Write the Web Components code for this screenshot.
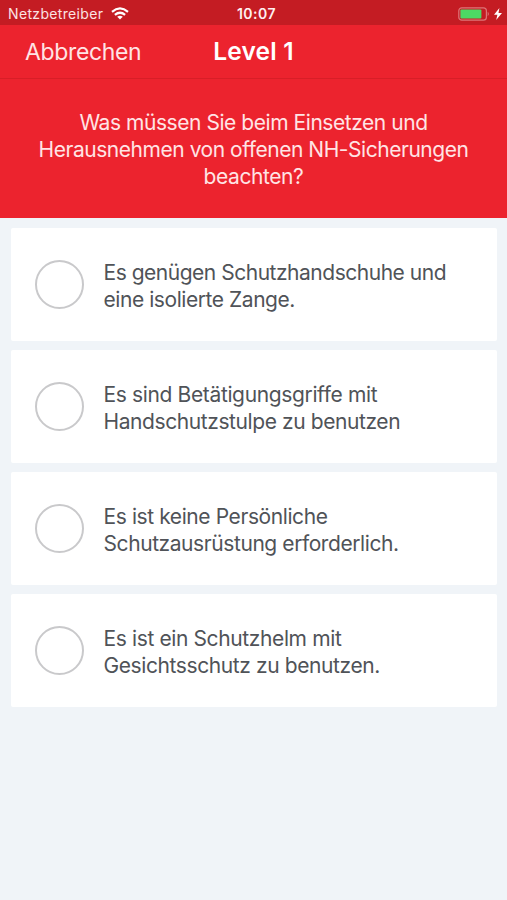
<!DOCTYPE html>
<html lang="de">
<head>
<meta charset="utf-8">
<title>Level 1</title>
<style>
html,body{margin:0;height:100%}
body{background:#f0f4f8;font-family:Inter,"Liberation Sans",sans-serif;overflow:hidden}
</style>
</head>
<body>
<quiz-screen></quiz-screen>
<script>
const define=(name,html)=>customElements.define(name,class extends HTMLElement{
  constructor(){super();this.attachShadow({mode:'open'}).innerHTML=html;}
});

class TextLine extends HTMLElement{
  constructor(){
    super();
    this.attachShadow({mode:'open'}).innerHTML=`<style>:host{display:block;white-space:nowrap}span{letter-spacing:var(--track,0)}</style><span><slot></slot></span>`;
  }
  connectedCallback(){this.style.setProperty('--track',(this.getAttribute('track')||0)+'px');}
}
customElements.define('text-line',TextLine);

define('status-bar',`<style>
:host{display:grid;grid-template-columns:1fr auto 1fr;align-items:center;height:25px;padding:2px 5px 0 8px;box-sizing:border-box;background:#c41c23;color:#fbe3e4;font-size:14px;line-height:23px}
.l{display:flex;align-items:center;gap:8px}
.t{font-weight:600;color:#fff0f0;padding-left:3px}
.r{display:flex;justify-content:flex-end;align-items:center;gap:4px}
svg{display:block}
</style>
<div class="l"><text-line track="0.34">Netzbetreiber</text-line>
<svg width="18" height="13" viewBox="0 0 18 13"><g fill="none" stroke="#fff" stroke-width="2.2"><path d="M1 4.8Q9-2 17 4.8"/><path d="M3.9 7.9Q9 3.6 14.1 7.9"/></g><path d="M6.2 9.7Q9 7.6 11.8 9.7L9 12.6Z" fill="#fff"/></svg></div>
<text-line class="t" track="0.5">10:07</text-line>
<div class="r"><svg width="32" height="14" viewBox="0 0 32 14"><rect x=".8" y=".8" width="27.6" height="12.4" rx="3" fill="none" stroke="#dd7478" stroke-width="1.2"/><rect x="2.4" y="2.4" width="21" height="9.2" rx="1" fill="#4cd964"/><path d="M29.7 4.8Q32 7 29.7 9.2Z" fill="#dd7478"/></svg>
<svg width="8" height="12" viewBox="0 0 8 12"><path d="M5.4 0 0 6.8H3.4L2.2 12 8 4.9H4.5Z" fill="#fff"/></svg></div>`);

define('nav-bar',`<style>
:host{display:grid;grid-template-columns:1fr auto 1fr;align-items:center;height:54px;box-sizing:border-box;padding:0 25px 2px;border-bottom:1px solid #d81e27;color:#fff;line-height:30px}
::slotted([slot=back]){font-size:23px;color:#ffe4e5;padding-top:2px}
::slotted([slot=title]){font-size:24.5px;font-weight:600}
</style><slot name="back"></slot><slot name="title"></slot>`);

define('question-panel',`<style>
:host{display:flex;flex-direction:column;align-items:center;height:139px;box-sizing:border-box;padding-top:30px;font-size:21px;line-height:27px;color:#ffe4e5}
</style><slot></slot>`);

define('answer-option',`<style>
:host{display:flex;align-items:center;gap:20px;height:112.7px;box-sizing:border-box;padding:0 24px;background:#fff;border-radius:2px;color:#505358;font-size:21px;line-height:27px}
i{width:49px;height:49px;box-sizing:border-box;border:2px solid #c9c9cb;border-radius:50%;flex:none}
div{padding-top:2.6px}
</style><i></i><div><slot></slot></div>`);

define('quiz-screen',`<style>
:host{display:block}
header{background:#ec232e}
main{display:flex;flex-direction:column;gap:9.4px;padding:10px 10px 0 10.5px}
</style>
<header><status-bar></status-bar>
<nav-bar><text-line slot="back" track="-0.35">Abbrechen</text-line><text-line slot="title" track="0.2">Level 1</text-line></nav-bar>
<question-panel><text-line track="-0.45">Was müssen Sie beim Einsetzen und</text-line><text-line track="-0.46">Herausnehmen von offenen NH-Sicherungen</text-line><text-line track="-0.42">beachten?</text-line></question-panel></header>
<main>
<answer-option><text-line track="-0.48">Es genügen Schutzhandschuhe und</text-line><text-line track="-0.44">eine isolierte Zange.</text-line></answer-option>
<answer-option><text-line track="-0.36">Es sind Betätigungsgriffe mit</text-line><text-line track="-0.41">Handschutzstulpe zu benutzen</text-line></answer-option>
<answer-option><text-line track="-0.41">Es ist keine Persönliche</text-line><text-line track="-0.42">Schutzausrüstung erforderlich.</text-line></answer-option>
<answer-option><text-line track="-0.38">Es ist ein Schutzhelm mit</text-line><text-line track="-0.4">Gesichtsschutz zu benutzen.</text-line></answer-option>
</main>`);
</script>
</body>
</html>
